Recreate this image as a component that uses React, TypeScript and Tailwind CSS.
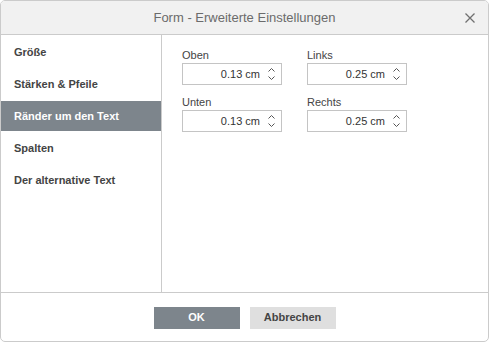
import React from "react";

const menu = ["Größe", "Stärken & Pfeile", "Ränder um den Text", "Spalten", "Der alternative Text"];

function Spin({ value }: { value: string }) {
    return (
        <div className="flex items-center h-[22px] w-[100px] border border-[#c4c4c4] bg-white">
            <span className="flex-1 text-right text-[11px] text-[#333] pr-[4px]">{value}</span>
            <div className="flex flex-col items-center justify-center w-[14px] mr-[3px] gap-[4px]">
                <svg width="7" height="4" viewBox="0 0 7 4">
                    <polyline points="0.5,3.5 3.5,0.5 6.5,3.5" fill="none" stroke="#555" strokeWidth="1" />
                </svg>
                <svg width="7" height="4" viewBox="0 0 7 4">
                    <polyline points="0.5,0.5 3.5,3.5 6.5,0.5" fill="none" stroke="#555" strokeWidth="1" />
                </svg>
            </div>
        </div>
    );
}

function Field({ label, value }: { label: string; value: string }) {
    return (
        <div className="flex flex-col w-[100px]">
            <span className="h-[14px] leading-[14px] text-[11px] text-[#444] mb-px">{label}</span>
            <Spin value={value} />
        </div>
    );
}

export default function App() {
    return (
        <div className="w-[489px] h-[342px] bg-white" style={{ fontFamily: '"Liberation Sans", Arial, sans-serif' }}>
            <div className="w-full h-full flex flex-col border border-[#cbcbcb] rounded-[5px] overflow-hidden">
                {/* Header */}
                <div className="relative h-[34px] shrink-0 bg-[#f1f1f1] border-b border-[#cbcbcb] flex items-center justify-center">
                    <span className="text-[13px] text-[#6b6b6b]">Form - Erweiterte Einstellungen</span>
                    <svg className="absolute right-[13px] top-[12px]" width="10" height="10" viewBox="0 0 10 10">
                        <path d="M0.5 0.5 L9.5 9.5 M9.5 0.5 L0.5 9.5" stroke="#707070" strokeWidth="1.3" />
                    </svg>
                </div>

                {/* Body */}
                <div className="flex flex-1 min-h-0">
                    <div className="w-[161px] shrink-0 border-r border-[#cbcbcb] pt-[2px] flex flex-col gap-[2px]">
                        {menu.map((item, i) => (
                            <div
                                key={i}
                                className={`h-[30px] flex items-center pl-[13px] text-[11px] font-bold ${i === 2 ? "bg-[#7d858c] text-white" : "text-[#444]"}`}
                            >
                                {item}
                            </div>
                        ))}
                    </div>
                    <div className="flex-1 pl-[20px] pt-[13px]">
                        <div className="grid grid-cols-[100px_100px] gap-x-[25px] gap-y-[10px]">
                            <Field label="Oben" value="0.13 cm" />
                            <Field label="Links" value="0.25 cm" />
                            <Field label="Unten" value="0.13 cm" />
                            <Field label="Rechts" value="0.25 cm" />
                        </div>
                    </div>
                </div>

                {/* Footer */}
                <div className="h-[49px] shrink-0 border-t border-[#cbcbcb] flex items-center justify-center gap-[10px] pt-px">
                    <button className="w-[86px] h-[22px] bg-[#7d858c] text-white text-[11px] font-bold">OK</button>
                    <button className="w-[86px] h-[22px] bg-[#dfdfdf] text-[#444] text-[11px] font-bold">Abbrechen</button>
                </div>
            </div>
        </div>
    );
}
